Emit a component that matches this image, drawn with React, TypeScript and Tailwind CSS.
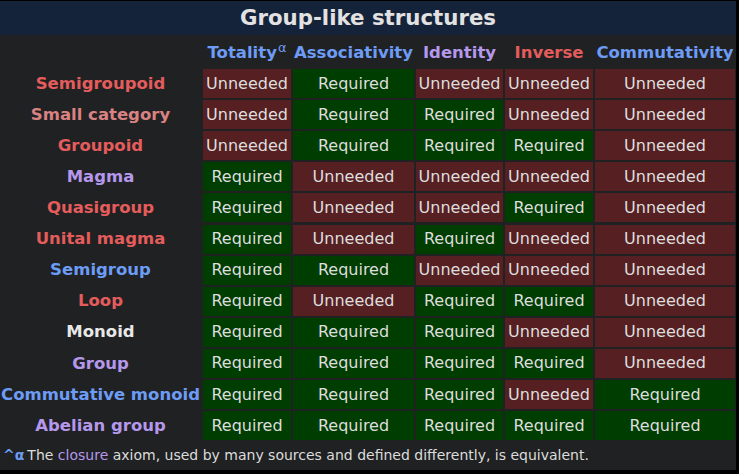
const RED = "text-[#e45c5c]";
const SALMON = "text-[#d98282]";
const BLUE = "text-[#6d9cf6]";
const PURPLE = "text-[#b598ec]";
const WHITE = "text-[#e8e8e8]";

const rows: { name: string; color: string; cells: boolean[] }[] = [
  { name: "Semigroupoid", color: RED, cells: [false, true, false, false, false] },
  { name: "Small category", color: SALMON, cells: [false, true, true, false, false] },
  { name: "Groupoid", color: RED, cells: [false, true, true, true, false] },
  { name: "Magma", color: PURPLE, cells: [true, false, false, false, false] },
  { name: "Quasigroup", color: RED, cells: [true, false, false, true, false] },
  { name: "Unital magma", color: RED, cells: [true, false, true, false, false] },
  { name: "Semigroup", color: BLUE, cells: [true, true, false, false, false] },
  { name: "Loop", color: RED, cells: [true, false, true, true, false] },
  { name: "Monoid", color: WHITE, cells: [true, true, true, false, false] },
  { name: "Group", color: PURPLE, cells: [true, true, true, true, false] },
  { name: "Commutative monoid", color: BLUE, cells: [true, true, true, false, true] },
  { name: "Abelian group", color: PURPLE, cells: [true, true, true, true, true] },
];

function Cell({ required }: { required: boolean }) {
  return (
    <div
      className={
        "flex items-center justify-center h-[29px] text-[16px] text-[#dedede] " +
        (required ? "bg-[#003d00]" : "bg-[#562022]")
      }
    >
      {required ? "Required" : "Unneeded"}
    </div>
  );
}

export default function App() {
  return (
    <div
      className="w-[739px] h-[474px] bg-black pt-px overflow-hidden"
      style={{ fontFamily: '"DejaVu Sans", sans-serif' }}
    >
      <div className="w-[736px] h-[469px] bg-[#202122] flex flex-col">
        <div className="h-[34px] bg-[#15233a] flex items-center justify-center text-[21.3px] font-bold text-[#e2e2e2]">
          Group-like structures
        </div>
        <div className="grid grid-cols-[201px_88px_121px_87px_88px_140px] gap-x-[2px] gap-y-[2.1px] text-[16.5px]">
          <div className="h-[32px]" />
          <div className={"h-[32px] pt-[4px] flex items-center justify-center font-bold " + BLUE}>
            Totality<sup className="text-[13px] font-normal relative -top-[5px] ml-[1px]">α</sup>
          </div>
          <div className={"h-[32px] pt-[4px] flex items-center justify-center font-bold " + BLUE}>Associativity</div>
          <div className={"h-[32px] pt-[4px] flex items-center justify-center font-bold " + PURPLE}>Identity</div>
          <div className={"h-[32px] pt-[4px] flex items-center justify-center font-bold " + RED}>Inverse</div>
          <div className={"h-[32px] pt-[4px] flex items-center justify-center font-bold " + BLUE}>Commutativity</div>
          {rows.map((r) => (
            <div key={r.name} className="contents">
              <div className={"h-[29px] pt-[1px] flex items-center justify-center font-bold " + r.color}>{r.name}</div>
              {r.cells.map((c, i) => (
                <Cell key={i} required={c} />
              ))}
            </div>
          ))}
        </div>
        <div className="flex-1 flex items-center pl-[3px] text-[14px] text-[#dcdcdc]">
          <span className={"font-bold " + BLUE}>^α</span>
          <span className="ml-[3px]">
            The <span className={PURPLE}>closure</span> axiom, used by many sources and defined differently, is
            equivalent.
          </span>
        </div>
      </div>
    </div>
  );
}
